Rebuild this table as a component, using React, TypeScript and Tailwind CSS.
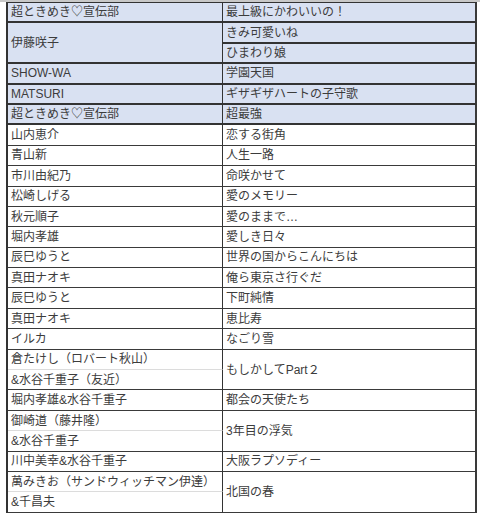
const font = "font-['Liberation_Sans','Noto_Sans_CJK_JP',sans-serif]"

type Cell = {
  text: string
  span?: boolean
  blue?: boolean
  left?: boolean
  soft?: boolean
}

const cells: Cell[] = [
  { text: "超ときめき♡宣伝部", blue: true, left: true },
  { text: "最上級にかわいいの！", blue: true },
  { text: "伊藤咲子", blue: true, left: true, span: true },
  { text: "きみ可愛いね", blue: true },
  { text: "ひまわり娘", blue: true },
  { text: "SHOW-WA", blue: true, left: true },
  { text: "学園天国", blue: true },
  { text: "MATSURI", blue: true, left: true },
  { text: "ギザギザハートの子守歌", blue: true },
  { text: "超ときめき♡宣伝部", blue: true, left: true },
  { text: "超最強", blue: true },
  { text: "山内恵介", left: true },
  { text: "恋する街角" },
  { text: "青山新", left: true },
  { text: "人生一路" },
  { text: "市川由紀乃", left: true },
  { text: "命咲かせて" },
  { text: "松崎しげる", left: true },
  { text: "愛のメモリー" },
  { text: "秋元順子", left: true },
  { text: "愛のままで…" },
  { text: "堀内孝雄", left: true },
  { text: "愛しき日々" },
  { text: "辰巳ゆうと", left: true },
  { text: "世界の国からこんにちは" },
  { text: "真田ナオキ", left: true },
  { text: "俺ら東京さ行ぐだ" },
  { text: "辰巳ゆうと", left: true },
  { text: "下町純情" },
  { text: "真田ナオキ", left: true },
  { text: "恵比寿" },
  { text: "イルカ", left: true },
  { text: "なごり雪" },
  { text: "倉たけし（ロバート秋山）", left: true, soft: true },
  { text: "もしかしてPart２", span: true },
  { text: "&水谷千重子（友近）", left: true },
  { text: "堀内孝雄&水谷千重子", left: true },
  { text: "都会の天使たち" },
  { text: "御崎道（藤井隆）", left: true, soft: true },
  { text: "3年目の浮気", span: true },
  { text: "&水谷千重子", left: true },
  { text: "川中美幸&水谷千重子", left: true },
  { text: "大阪ラプソディー" },
  { text: "萬みきお（サンドウィッチマン伊達）", left: true, soft: true },
  { text: "北国の春", span: true },
  { text: "&千昌夫", left: true },
]

function TableCell({ cell }: { cell: Cell }) {
  const base = "flex items-center overflow-hidden whitespace-nowrap pl-[3px]"
  const span = cell.span ? "row-span-2" : ""
  const bg = cell.blue ? "bg-[#d9e1f2]" : "bg-white"
  const right = cell.left ? "border-r border-r-[#333]" : "border-r-2 border-r-[#3a3a3a]"
  const bottom = cell.soft
    ? "border-b border-b-[#dcdcdc]"
    : cell.blue
      ? "border-b-2 border-b-[#333]"
      : "border-b border-b-[#3a3a3a]"
  return <div className={`${base} ${span} ${bg} ${right} ${bottom}`}>{cell.text}</div>
}

export default function App() {
  return (
    <div className={`w-[480px] h-[513px] overflow-hidden bg-white ${font} text-[12px] text-[#3c3c3c]`}>
      <div className="h-[2px] bg-[#c8c8c8]" />
      <div className="pl-[6px]">
        <div className="grid w-[471px] grid-cols-[215px_254px] grid-rows-[repeat(25,20.4px)] border-l-2 border-t border-[#333]">
          {cells.map((c, i) => (
            <TableCell key={i} cell={c} />
          ))}
        </div>
      </div>
    </div>
  )
}
